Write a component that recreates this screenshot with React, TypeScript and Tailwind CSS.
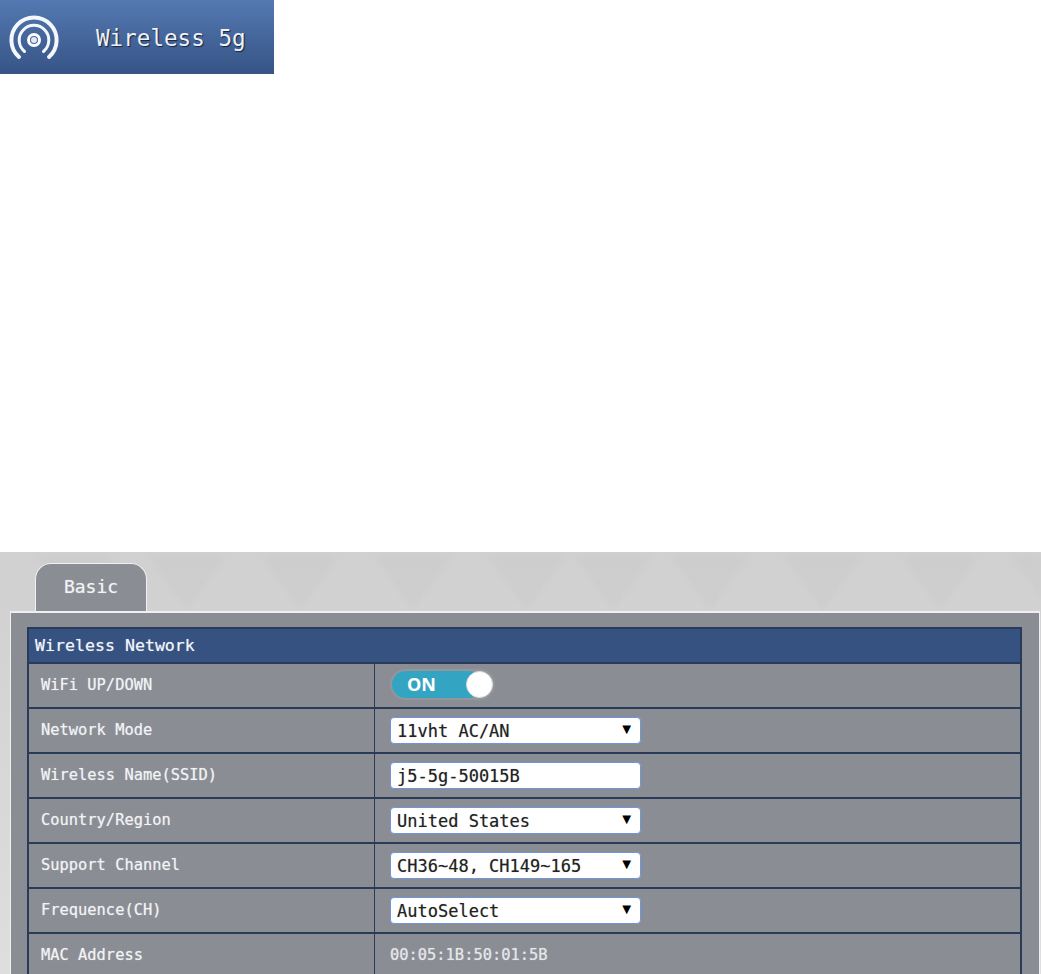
const mono = "font-['DejaVu_Sans_Mono',monospace]";
const softLight = "[text-shadow:0_0_1px_rgba(255,255,255,0.55)]";
const softDark = "[text-shadow:0_0_1px_rgba(0,0,0,0.35)]";

function WifiLogo() {
  return (
    <svg width="60" height="60" viewBox="0 0 60 60" fill="none" className="shrink-0 blur-[0.7px]">
      <g stroke="#f4f7fb" strokeLinecap="round" fill="none">
        <path d="M16 50 A22.6 22.6 0 1 1 46 50" strokeWidth="4" />
        <path d="M21.5 44.5 A14.8 14.8 0 1 1 40.5 44.5" strokeWidth="3" />
      </g>
      <circle cx="31" cy="33" r="5.5" stroke="#ffffff" strokeWidth="3" />
      <circle cx="31" cy="33" r="3" fill="#dfe8f4" />
    </svg>
  );
}

function Select({ value }: { value: string }) {
  return (
    <div className="flex h-[27px] w-[251px] items-center justify-between rounded-[4px] border border-[#6f96dc] bg-white pl-[6px] pr-[6px]">
      <span className={`${mono} ${softDark} pt-[2px] text-[17px] leading-none text-[#222]`}>{value}</span>
      <span className="mb-[5px] text-[15px] leading-none text-black">▼</span>
    </div>
  );
}

function Row({ label, children }: { label: string; children: React.ReactNode }) {
  return (
    <div className="flex h-[45px] border-b-2 border-[#2a3b57]">
      <div className={`${mono} ${softLight} flex w-[346px] items-center border-r border-[#2a3b57] pl-[12px] text-[15.4px] text-[#f1f3f4]`}>
        {label}
      </div>
      <div className="flex flex-1 items-center pl-[15px]">{children}</div>
    </div>
  );
}

function Toggle() {
  return (
    <div className="relative mb-[3px] flex h-[31px] w-[105px] items-center rounded-full bg-[#93979b] p-[2px]">
      <div className="flex h-[27px] w-[90px] items-center rounded-full bg-[#33a5c2] pl-[15px] font-['Open_Sans',sans-serif] text-[18px] font-bold leading-none text-white">
        ON
      </div>
      <div className="absolute right-[2px] top-[2px] h-[27px] w-[27px] rounded-full border border-[#ddd] bg-white" />
    </div>
  );
}

function Pattern() {
  // faint triangles behind the panel, apex x taken from the picture
  const apexes = [75, 187, 300, 413, 527, 613, 710, 823, 940, 1050];
  return (
    <svg className="absolute inset-0 h-full w-full blur-[2px]" width="1041" height="422">
      {apexes.map((x) => (
        <polygon key={x} points={`${x - 37},4 ${x + 37},4 ${x},59`} fill="#cbcbcb" fillOpacity="0.6" />
      ))}
    </svg>
  );
}

export default function App() {
  return (
    <div className="h-[974px] w-[1041px] overflow-hidden bg-white">
      <div className="flex h-[74px] w-[274px] items-center bg-gradient-to-b from-[#5379b2] to-[#375486] pl-[3px]">
        <WifiLogo />
        <span className={`${mono} ml-[33px] mt-[2px] text-[22.6px] leading-none text-[#eef2f6] [text-shadow:1px_1px_1px_#14233f]`}>
          Wireless 5g
        </span>
      </div>

      <div className="relative mt-[478px] h-[422px] overflow-hidden bg-gradient-to-b from-[#d0d0d0] to-[#dedede] pr-px">
        <Pattern />
        <div className="relative flex h-[59px] items-end pl-[35px]">
          <div className={`${mono} ${softLight} -mb-[2px] flex h-[50px] w-[112px] justify-center rounded-t-[16px] border-x border-t border-[#f0f0f0] bg-[#8a8d94] pt-[14px] text-[18px] leading-none text-[#f2f3f4]`}>
            Basic
          </div>
        </div>
        <div className="relative ml-[10px] h-[363px] border-l border-t-2 border-r border-[#efefef] bg-[#8a8d94] pl-[16px] pr-[17px] pt-[14px]">
          <div className="border-x-2 border-[#2a3b57]">
            <div className={`${mono} ${softLight} flex h-[37px] items-center border-y-2 border-[#2a3b57] bg-[#355281] pl-[6px] pt-[2px] text-[16.6px] text-[#f2f5f8]`}>
              Wireless Network
            </div>
            <Row label="WiFi UP/DOWN">
              <Toggle />
            </Row>
            <Row label="Network Mode">
              <Select value="11vht AC/AN" />
            </Row>
            <Row label="Wireless Name(SSID)">
              <div className={`${mono} ${softDark} flex h-[27px] w-[251px] items-center rounded-[4px] border border-[#6f96dc] bg-white pl-[6px] pt-[2px] text-[17px] leading-none text-[#222]`}>
                j5-5g-50015B
              </div>
            </Row>
            <Row label="Country/Region">
              <Select value="United States" />
            </Row>
            <Row label="Support Channel">
              <Select value="CH36~48, CH149~165" />
            </Row>
            <Row label="Frequence(CH)">
              <Select value="AutoSelect" />
            </Row>
            <Row label="MAC Address">
              <span className={`${mono} ${softLight} text-[15.4px] text-[#e4e6e8]`}>00:05:1B:50:01:5B</span>
            </Row>
          </div>
        </div>
      </div>
    </div>
  );
}
